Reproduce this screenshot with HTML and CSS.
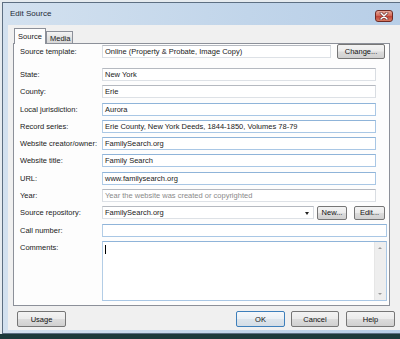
FILE: index.html
```html
<!DOCTYPE html>
<html>
<head>
<meta charset="utf-8">
<link rel="stylesheet" href="styles.css">
</head>
<body>
<div class="window">
  <div class="titlebar">
    <span class="title">Edit Source</span>
    <span class="close"><svg width="10" height="8" viewBox="0 0 10 8"><path d="M2 1 L8 7 M8 1 L2 7" stroke="#5a1f1f" stroke-width="2.6" stroke-linecap="round"/><path d="M2 1 L8 7 M8 1 L2 7" stroke="#fff" stroke-width="1.5" stroke-linecap="round"/></svg></span>
  </div>
  <div class="client">
    <div class="tabs">
      <div class="tab active">Source</div>
      <div class="tab">Media</div>
    </div>
    <div class="panel">
      <div class="row row-template">
        <span class="label">Source template:</span>
        <span class="box gray w-template">Online (Property &amp; Probate, Image Copy)</span>
        <span class="btn btn-change">Change...</span>
      </div>
      <div class="rows">
        <div class="row"><span class="label">State:</span><span class="box gray">New York</span></div>
        <div class="row"><span class="label">County:</span><span class="box gray">Erie</span></div>
        <div class="row"><span class="label">Local jurisdiction:</span><span class="box blue">Aurora</span></div>
        <div class="row"><span class="label">Record series:</span><span class="box blue">Erie County, New York Deeds, 1844-1850, Volumes 78-79</span></div>
        <div class="row"><span class="label">Website creator/owner:</span><span class="box blue">FamilySearch.org</span></div>
        <div class="row"><span class="label">Website title:</span><span class="box blue">Family Search</span></div>
        <div class="row"><span class="label">URL:</span><span class="box blue">www.familysearch.org</span></div>
        <div class="row"><span class="label">Year:</span><span class="box gray placeholder">Year the website was created or copyrighted</span></div>
        <div class="row">
          <span class="label">Source repository:</span>
          <span class="box gray combo">FamilySearch.org<span class="arrow"></span></span>
          <span class="btn btn-new">New...</span>
          <span class="btn btn-edit">Edit...</span>
        </div>
        <div class="row"><span class="label">Call number:</span><span class="box blue wide"></span></div>
        <div class="row row-comments">
          <span class="label">Comments:</span>
          <span class="box blue wide memo"><span class="caret"></span><span class="scroll"><span class="up"></span><span class="down"></span></span></span>
        </div>
      </div>
    </div>
    <div class="footer">
      <span class="btn btn-usage">Usage</span>
      <span class="spacer"></span>
      <span class="btn btn-ok">OK</span>
      <span class="btn btn-cancel">Cancel</span>
      <span class="btn btn-help">Help</span>
    </div>
  </div>
</div>
</body>
</html>
```

FILE: styles.css
```css
html, body {
  margin: 0;
  padding: 0;
}
body {
  width: 400px;
  height: 339px;
  overflow: hidden;
  background: linear-gradient(#e6ebef 0, #e6ebef 334px, #1d3a3b 334px);
  font-family: "Liberation Sans", Arial, sans-serif;
  font-size: 7.5px;
  color: #1a1a1a;
}
.window {
  margin: 2px 0 0 2px;
  width: 404px;
  height: 330px;
  border: 1px solid #5d6f82;
  border-right: none;
  background: linear-gradient(to right, #d3e1ef, #c1d5ea 60%, #b7cee7);
  padding: 0 0 0 5px;
  display: flex;
  flex-direction: column;
}
.titlebar {
  height: 22px;
  display: flex;
  align-items: center;
  position: relative;
}
.title {
  margin-left: 2px;
  margin-top: -2px;
  font-size: 8px;
  color: #1e2a36;
}
.close {
  position: absolute;
  left: 367px;
  top: 7px;
  width: 16px;
  height: 10px;
  border: 1px solid #6e2a24;
  border-radius: 3px;
  background: linear-gradient(#e9a99b, #d26a58 45%, #c0453a 55%, #d77b62);
  display: flex;
  align-items: center;
  justify-content: center;
}
.client {
  width: 392px;
  height: 305px;
  background: #f0f0f0;
  padding-top: 3px;
  box-sizing: border-box;
}
.tabs {
  display: flex;
  align-items: flex-end;
  margin-left: 6px;
  height: 15px;
  position: relative;
  z-index: 1;
}
.tab {
  height: 12px;
  box-sizing: border-box;
  border: 1px solid #8c9099;
  border-bottom: none;
  padding: 2px 3px 0;
  background: linear-gradient(#f4f4f4, #e3e3e3 50%, #d7d7d7);
  line-height: 9px;
  width: 27px;
  text-align: center;
  font-size: 7.5px;
}
.tab.active {
  height: 16px;
  width: 32px;
  margin-bottom: -1px;
  background: #fdfdfd;
  padding-top: 3px;
}
.panel {
  margin-left: 5px;
  width: 377px;
  height: 263px;
  box-sizing: border-box;
  border: 1px solid #8c9099;
  background: #fdfdfd;
  padding: 0 2px 0 6px;
}
.row {
  display: flex;
  align-items: center;
  height: 13px;
}
.row-template {
  height: 15px;
  margin-bottom: 9px;
}
.rows {
  display: flex;
  flex-direction: column;
  gap: 4.3px;
}
.label {
  width: 82px;
  flex: none;
  white-space: nowrap;
}
.box {
  height: 13px;
  width: 274px;
  box-sizing: border-box;
  border: 1px solid #b7bcc3;
  background: #fff;
  padding-left: 2px;
  line-height: 11px;
  white-space: nowrap;
  overflow: hidden;
  flex: none;
  position: relative;
}
.box.gray {
  border-color: #b5b9c0 #d9dde2 #dde1e6 #d9dde2;
}
.box.blue {
  border-color: #8fb4d9 #a9c7e5 #a9c7e5 #b3cde6;
}
.w-template {
  width: 229px;
}
.placeholder {
  color: #8a8a8a;
}
.combo {
  width: 212px;
  border-color: #d5d9de;
}
.arrow {
  position: absolute;
  right: 4px;
  top: 5px;
  width: 0;
  height: 0;
  border-left: 2.5px solid transparent;
  border-right: 2.5px solid transparent;
  border-top: 3px solid #222;
}
.wide {
  width: 285px;
}
.row-comments {
  height: 60px;
  align-items: flex-start;
}
.row-comments .label {
  margin-top: 2px;
}
.memo {
  height: 60px;
}
.caret {
  position: absolute;
  left: 2px;
  top: 3px;
  width: 1px;
  height: 9px;
  background: #000;
}
.scroll {
  position: absolute;
  right: 0;
  top: 0;
  bottom: 0;
  width: 11px;
  background: #eeeeee;
  border-left: 1px solid #e6e6e6;
}
.up, .down {
  position: absolute;
  left: 3px;
  width: 0;
  height: 0;
  border-left: 2.5px solid transparent;
  border-right: 2.5px solid transparent;
}
.up {
  top: 5px;
  border-bottom: 2.5px solid #9a9a9a;
}
.down {
  bottom: 5px;
  border-top: 2.5px solid #9a9a9a;
}
.btn {
  box-sizing: border-box;
  border: 1px solid #767676;
  border-radius: 2px;
  background: linear-gradient(#f3f3f3, #ebebeb 48%, #dcdcdc 52%, #d0d0d0);
  text-align: center;
  flex: none;
  display: flex;
  align-items: center;
  justify-content: center;
  color: #111;
}
.btn-change {
  width: 48px;
  height: 15px;
  margin-left: 6px;
}
.btn-new {
  width: 30px;
  height: 14px;
  margin-left: 3px;
}
.btn-edit {
  width: 31px;
  height: 14px;
  margin-left: 7px;
}
.footer {
  display: flex;
  align-items: center;
  margin-top: 5px;
  padding: 0 5px 0 9px;
  height: 16px;
}
.spacer {
  flex: 1;
}
.footer .btn {
  height: 16px;
}
.btn-usage {
  width: 49px;
}
.btn-ok {
  width: 49px;
  border-color: #3d7fbb;
  background: linear-gradient(#f5f8fb, #eaf0f5 48%, #dde5ec 52%, #d3dde6);
}
.btn-cancel {
  width: 48px;
  margin-left: 6px;
}
.btn-help {
  width: 49px;
  margin-left: 7px;
}
```
